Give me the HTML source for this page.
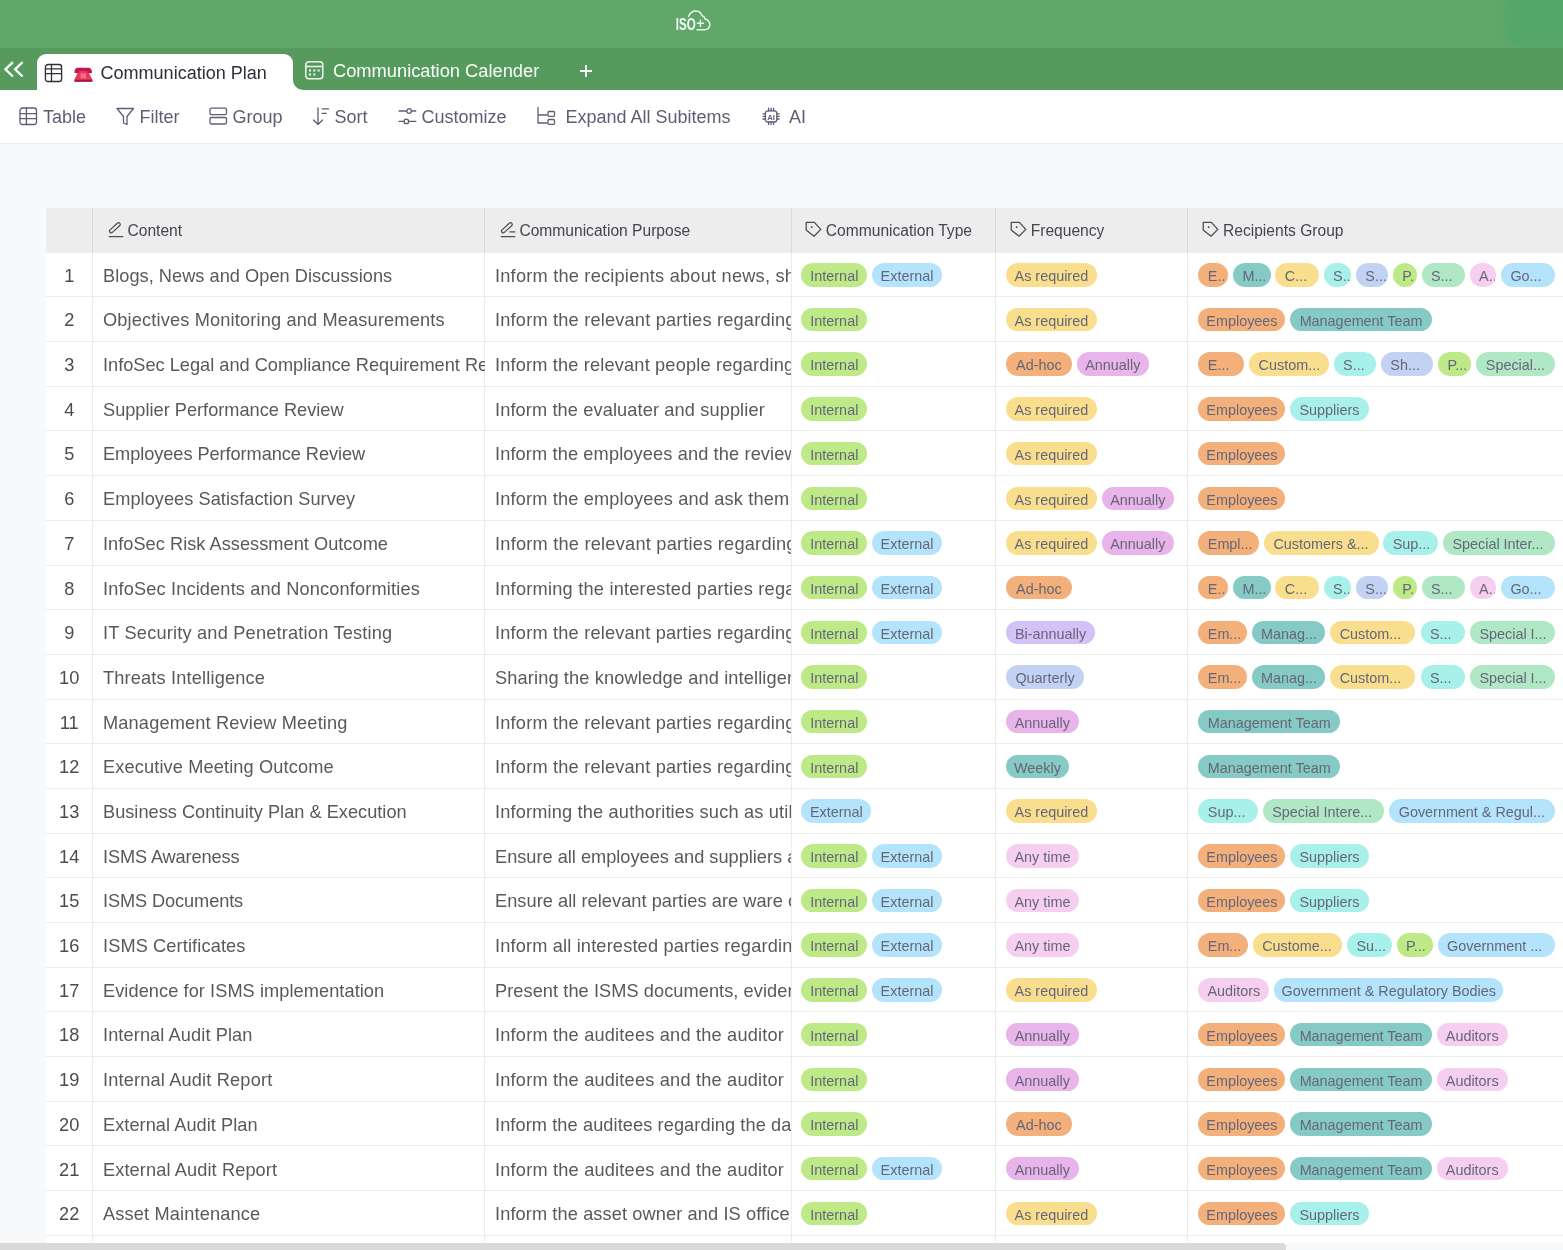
<!DOCTYPE html><html><head><meta charset="utf-8"><style>
*{margin:0;padding:0;box-sizing:border-box}
html,body{width:1563px;height:1250px;overflow:hidden;background:#f8f9fb;font-family:"Liberation Sans",sans-serif}
#wrap{position:absolute;left:0;top:0;width:1563px;height:1250px;will-change:transform;filter:blur(0.4px)}
.abs{position:absolute}
#top{position:absolute;left:0;top:0;width:1563px;height:47.5px;background:#60a76a}
#blob{position:absolute;left:1505px;top:-12px;width:80px;height:59px;background:#54a769;border-radius:16px;filter:blur(2.5px)}
#tabs{position:absolute;left:0;top:47.5px;width:1563px;height:42.7px;background:#569a5e}
#tb{position:absolute;left:0;top:90.2px;width:1563px;height:53.8px;background:#fff;border-bottom:1px solid #ececee}
.tabact{position:absolute;left:37px;top:54.3px;width:256px;height:40px;background:#fff;border-radius:9px 9px 0 0}
.tabinv{position:absolute;left:293px;top:80px;width:12px;height:10.2px;background:#fff}
.tabinv2{position:absolute;left:293px;top:70px;width:24px;height:20.2px;background:#569a5e;border-radius:0 0 0 10px}
.tl{position:absolute;white-space:nowrap;font-size:18px;line-height:20px}
.ti{position:absolute;white-space:nowrap;font-size:18px;line-height:20px;color:#5c5e74}
#grid{position:absolute;left:46px;top:208.2px;width:1517px;height:1035px;background:#fff}
#hdr{position:absolute;left:46px;top:208.2px;width:1517px;height:44.5px;background:#ededed}
.hl{position:absolute;top:0;height:44.5px;width:1px;background:#dadada}
.ht{position:absolute;top:0;height:44.5px;display:flex;align-items:center;font-size:15.6px;color:#454552;white-space:nowrap}
.hts{position:absolute;top:221.2px;height:20px;line-height:20px;font-size:15.6px;color:#454552;white-space:nowrap}
.abs>svg{display:block}
.ht svg{margin-right:4px}
.vl{position:absolute;top:252.7px;height:990px;width:1px;background:#ececec}
.row{position:absolute;left:46px;width:1517px;height:44.69px;border-bottom:1px solid #ececec}
.row>*{position:absolute}
.num{left:0;width:46.4px;top:0;height:44px;line-height:46px;text-align:center;font-size:18.2px;color:#4c4c4c}
.txt{top:0;height:44px;line-height:46px;font-size:18.2px;color:#595959;white-space:nowrap;overflow:hidden}
.p{top:10.4px;height:23.5px;line-height:26.3px;border-radius:12px;font-size:14.4px;color:#66667a;white-space:nowrap;overflow:hidden}
.p.c{text-align:center}
.p.t{padding-left:9.4px}
#sb{position:absolute;left:0;top:1243.3px;width:1563px;height:7px;background:#f8f9fb}
#thumb{position:absolute;left:0;top:1243.3px;width:1286px;height:7px;background:#d9d9d9;border-radius:0 4px 0 0}
</style></head><body><div id="wrap">
<div id="top"></div><div id="blob"></div>
<svg class="abs" style="left:674px;top:9px" width="40" height="24" viewBox="0 0 40 24"><text x="1.8" y="20.7" font-family="Liberation Sans" font-weight="bold" font-size="16.5" fill="#f4f8f4" textLength="20" lengthAdjust="spacingAndGlyphs">ISO</text><path d="M14.5 7.5 Q17 1.8 22 2 Q26.5 2.2 27.8 6.5 Q30.5 7.2 31.2 10 Q35.8 11.5 35.8 15.8 Q35.5 20.6 30.5 20.8 H23" fill="none" stroke="#eef4ee" stroke-width="1.5" stroke-linecap="round"/><path d="M26.4 10.7 V17.9 M22.8 14.3 H30" stroke="#eef4ee" stroke-width="1.4"/></svg>
<div id="tabs"></div>
<div id="tb"></div>
<div class="tabact"></div><div class="tabinv"></div><div class="tabinv2"></div>
<svg class="abs" style="left:3px;top:60px" width="22" height="20" viewBox="0 0 22 20" fill="none" stroke="#fff" stroke-width="2.3" stroke-linecap="butt" stroke-linejoin="miter"><path d="M9.9 2.1 L2.4 9.3 L9.9 16.5"/><path d="M19.6 2.1 L12.1 9.3 L19.6 16.5"/></svg>
<svg class="abs" style="left:44px;top:63px" width="20" height="20" viewBox="0 0 20 20" fill="none" stroke="#2f2f38" stroke-width="1.3"><rect x="1.4" y="1.5" width="16.2" height="17" rx="2.6"/><path d="M1.4 5.8 H17.6 M1.4 10.6 H17.6 M7.5 1.5 V18.5"/></svg>
<svg class="abs" style="left:74px;top:67px" width="19" height="16" viewBox="0 0 19 16"><path d="M4.3 4.2 H14.2 L18.3 12.5 V14.7 H0.5 V12.5 Z" fill="#e8375b"/><path d="M0.4 5.9 Q0.6 1.2 3.2 0.8 H15.2 Q17.8 1.2 18.1 5.9 H13.6 L13.2 4.4 H5.3 L4.9 5.9 Z" fill="#c01848"/><rect x="0.5" y="12.7" width="17.8" height="2" fill="#a8173e"/><rect x="6.6" y="6.3" width="5.6" height="5.2" fill="#f09ab0" opacity="0.55"/></svg>
<div class="tl" style="left:100.5px;top:63.2px;color:#2e2e3a;font-size:18.05px">Communication Plan</div>
<svg class="abs" style="left:304px;top:60px" width="21" height="21" viewBox="0 0 21 21" fill="none" stroke="#f2f6f2" stroke-width="1.5"><rect x="1.8" y="1.8" width="17" height="17" rx="3"/><path d="M1.8 6.5 H18.8"/><g fill="#f2f6f2" stroke="none"><rect x="5" y="9.5" width="2" height="2"/><rect x="9.3" y="9.5" width="2" height="2"/><rect x="13.6" y="9.5" width="2" height="2"/><rect x="5" y="13.5" width="2" height="2"/><rect x="9.3" y="13.5" width="2" height="2"/></g></svg>
<div class="tl" style="left:333px;top:61px;color:#fbfdfb;font-size:18.3px">Communication Calender</div>
<svg class="abs" style="left:579px;top:64px" width="14" height="14" viewBox="0 0 14 14" stroke="#fff" stroke-width="1.8"><path d="M7 1 V13 M1 7 H13"/></svg>
<svg class="abs" style="left:19px;top:107px" width="19" height="19" viewBox="0 0 19 19" fill="none" stroke="#5c5e74" stroke-width="1.3" stroke-linecap="round" stroke-linejoin="round"><rect x="1" y="1" width="16.5" height="16.5" rx="2.5"/><path d="M1 6.6 H17.5 M1 11.6 H17.5 M7.4 1 V17.5"/></svg>
<div class="ti" style="left:43px;top:107px">Table</div>
<svg class="abs" style="left:116px;top:107px" width="19" height="19" viewBox="0 0 19 19" fill="none" stroke="#5c5e74" stroke-width="1.3" stroke-linecap="round" stroke-linejoin="round"><path d="M1 1.5 H17.5 L11 9.5 V17.5 L7.5 16 V9.5 Z"/></svg>
<div class="ti" style="left:139.5px;top:107px">Filter</div>
<svg class="abs" style="left:209px;top:107px" width="19" height="19" viewBox="0 0 19 19" fill="none" stroke="#5c5e74" stroke-width="1.3" stroke-linecap="round" stroke-linejoin="round"><rect x="1" y="1.2" width="16.5" height="6.5" rx="1.5"/><rect x="1" y="10.5" width="16.5" height="6.5" rx="1.5"/></svg>
<div class="ti" style="left:232.5px;top:107px">Group</div>
<svg class="abs" style="left:311px;top:107px" width="19" height="19" viewBox="0 0 19 19" fill="none" stroke="#5c5e74" stroke-width="1.3" stroke-linecap="round" stroke-linejoin="round"><path d="M7 1 V17.5 M2.5 13 L7 17.5 L11.5 13 M11.2 1.8 H17.6 M11.2 6.4 H15.2"/></svg>
<div class="ti" style="left:334.5px;top:107px">Sort</div>
<svg class="abs" style="left:398px;top:107px" width="19" height="19" viewBox="0 0 19 19" fill="none" stroke="#5c5e74" stroke-width="1.3" stroke-linecap="round" stroke-linejoin="round"><path d="M1 4 H8.7 M13.5 4 H17.8 M1 14.4 H5.8 M10.8 14.4 H17.8"/><circle cx="11.1" cy="4" r="2.3"/><circle cx="8.3" cy="14.4" r="2.3"/></svg>
<div class="ti" style="left:421.5px;top:107px">Customize</div>
<svg class="abs" style="left:536px;top:106px" width="21" height="20" viewBox="0 0 21 20" fill="none" stroke="#5c5e74" stroke-width="1.3" stroke-linecap="round" stroke-linejoin="round"><path d="M2 1.5 V17 H11 M2 9 H11"/><rect x="12" y="5.5" width="6.5" height="4.8" rx="1"/><rect x="12" y="13.5" width="6.5" height="4.8" rx="1"/></svg>
<div class="ti" style="left:565.5px;top:107px">Expand All Subitems</div>
<svg class="abs" style="left:762px;top:107px" width="19" height="19" viewBox="0 0 19 19" fill="none" stroke="#5c5e74" stroke-width="1.3" stroke-linecap="round" stroke-linejoin="round"><rect x="3.4" y="3.8" width="11.4" height="11.2" rx="2.6"/><path d="M6.6 1.2 V3.8 M9.1 1.2 V3.8 M11.6 1.2 V3.8 M6.6 15 V17.4 M9.1 15 V17.4 M11.6 15 V17.4 M1 6.8 H3.4 M1 9.4 H3.4 M1 12 H3.4 M14.8 6.8 H17.2 M14.8 9.4 H17.2 M14.8 12 H17.2"/><text x="5.2" y="12.9" font-size="7.8" font-family="Liberation Sans" font-weight="bold" fill="#5c5e74" stroke="none">AI</text></svg>
<div class="ti" style="left:789px;top:107px">AI</div>
<div id="grid"></div>
<div id="hdr">
<div class="hl" style="left:45.9px"></div>
<div class="hl" style="left:438.1px"></div>
<div class="hl" style="left:744.5px"></div>
<div class="hl" style="left:948.9px"></div>
<div class="hl" style="left:1141.4px"></div>
</div>
<div class="abs" style="left:107.5px;top:219.5px"><svg width="16" height="18" viewBox="0 0 16 18" fill="none" stroke="#505058" stroke-width="1.3" stroke-linecap="round"><rect x="0.25" y="6.1" width="13.2" height="3.4" rx="1.7" transform="rotate(-42.7 6.85 7.8)"/><path d="M1.15 16.6 H14.85"/></svg></div><div class="hts" style="left:127.5px">Content</div>
<div class="abs" style="left:499.5px;top:219.5px"><svg width="16" height="18" viewBox="0 0 16 18" fill="none" stroke="#505058" stroke-width="1.3" stroke-linecap="round"><rect x="0.25" y="6.1" width="13.2" height="3.4" rx="1.7" transform="rotate(-42.7 6.85 7.8)"/><path d="M9.85 11.9 H14.85"/><path d="M1.15 16.6 H14.85"/></svg></div><div class="hts" style="left:519.4px">Communication Purpose</div>
<div class="abs" style="left:805px;top:221px"><svg width="17" height="17" viewBox="0 0 17 17" fill="none" stroke="#4a4a55" stroke-width="1.25" stroke-linejoin="round"><path d="M1.2 1.3 H9.4 L15.8 8.4 L9 15.2 L1.2 9 Z"/><circle cx="6.7" cy="6.1" r="0.95" fill="#3a3a45" stroke="none"/></svg></div><div class="hts" style="left:825.8px">Communication Type</div>
<div class="abs" style="left:1010.2px;top:221px"><svg width="17" height="17" viewBox="0 0 17 17" fill="none" stroke="#4a4a55" stroke-width="1.25" stroke-linejoin="round"><path d="M1.2 1.3 H9.4 L15.8 8.4 L9 15.2 L1.2 9 Z"/><circle cx="6.7" cy="6.1" r="0.95" fill="#3a3a45" stroke="none"/></svg></div><div class="hts" style="left:1030.7px">Frequency</div>
<div class="abs" style="left:1202px;top:221px"><svg width="17" height="17" viewBox="0 0 17 17" fill="none" stroke="#4a4a55" stroke-width="1.25" stroke-linejoin="round"><path d="M1.2 1.3 H9.4 L15.8 8.4 L9 15.2 L1.2 9 Z"/><circle cx="6.7" cy="6.1" r="0.95" fill="#3a3a45" stroke="none"/></svg></div><div class="hts" style="left:1223px">Recipients Group</div>
<div class="vl" style="left:91.9px"></div><div class="vl" style="left:484.1px"></div><div class="vl" style="left:790.5px"></div><div class="vl" style="left:994.9px"></div><div class="vl" style="left:1187.4px"></div>
<div class="row" style="top:252.70px"><div class="num">1</div><div class="txt" style="left:57.0px;width:381.6px;letter-spacing:0.035px">Blogs, News and Open Discussions</div><div class="txt" style="left:449.0px;width:296.0px;letter-spacing:0.22px">Inform the recipients about news, shared knowledge and open discussions</div><span class="p c" style="left:755.4px;width:65.9px;background:#bde987">Internal</span><span class="p c" style="left:826.1px;width:69.8px;background:#b3e4fb">External</span><span class="p c" style="left:960.0px;width:90.7px;background:#f9df8d">As required</span><span class="p t" style="left:1152.4px;width:29.8px;background:#f4b07a">E...</span><span class="p t" style="left:1187.0px;width:37.7px;background:#86cac5">M...</span><span class="p t" style="left:1229.4px;width:43.5px;background:#f9df8d">C...</span><span class="p t" style="left:1277.7px;width:27.4px;background:#a8f0ea">S..</span><span class="p t" style="left:1309.9px;width:32.2px;background:#c1d2f3">S...</span><span class="p t" style="left:1346.9px;width:23.8px;background:#bde987">P.</span><span class="p t" style="left:1375.5px;width:43.4px;background:#b0e8c6">S...</span><span class="p t" style="left:1423.7px;width:26.5px;background:#f6cff0">A..</span><span class="p t" style="left:1455.0px;width:53.7px;background:#b3e4fb">Go...</span></div>
<div class="row" style="top:297.39px"><div class="num">2</div><div class="txt" style="left:57.0px;width:381.6px;letter-spacing:0.16px">Objectives Monitoring and Measurements</div><div class="txt" style="left:449.0px;width:296.0px;letter-spacing:0.2px">Inform the relevant parties regarding the objectives</div><span class="p c" style="left:755.4px;width:65.9px;background:#bde987">Internal</span><span class="p c" style="left:960.0px;width:90.7px;background:#f9df8d">As required</span><span class="p c" style="left:1152.4px;width:87.1px;background:#f4b07a">Employees</span><span class="p c" style="left:1244.3px;width:141.6px;background:#86cac5">Management Team</span></div>
<div class="row" style="top:342.08px"><div class="num">3</div><div class="txt" style="left:57.0px;width:381.6px;letter-spacing:0px">InfoSec Legal and Compliance Requirement Review</div><div class="txt" style="left:449.0px;width:296.0px;letter-spacing:0.17px">Inform the relevant people regarding the requirements</div><span class="p c" style="left:755.4px;width:65.9px;background:#bde987">Internal</span><span class="p c" style="left:960.0px;width:65.7px;background:#f4b07a">Ad-hoc</span><span class="p c" style="left:1030.5px;width:72.5px;background:#e8b4ea">Annually</span><span class="p t" style="left:1152.4px;width:46.0px;background:#f4b07a">E...</span><span class="p t" style="left:1203.2px;width:79.7px;background:#f9df8d">Custom...</span><span class="p t" style="left:1287.7px;width:42.0px;background:#a8f0ea">S...</span><span class="p t" style="left:1334.9px;width:52.1px;background:#c1d2f3">Sh...</span><span class="p t" style="left:1392.2px;width:32.9px;background:#bde987">P...</span><span class="p t" style="left:1430.4px;width:78.3px;background:#b0e8c6">Special...</span></div>
<div class="row" style="top:386.77px"><div class="num">4</div><div class="txt" style="left:57.0px;width:381.6px;letter-spacing:0px">Supplier Performance Review</div><div class="txt" style="left:449.0px;width:296.0px;letter-spacing:0.12px">Inform the evaluater and supplier</div><span class="p c" style="left:755.4px;width:65.9px;background:#bde987">Internal</span><span class="p c" style="left:960.0px;width:90.7px;background:#f9df8d">As required</span><span class="p c" style="left:1152.4px;width:87.1px;background:#f4b07a">Employees</span><span class="p c" style="left:1244.3px;width:78.3px;background:#a8f0ea">Suppliers</span></div>
<div class="row" style="top:431.46px"><div class="num">5</div><div class="txt" style="left:57.0px;width:381.6px;letter-spacing:-0.06px">Employees Performance Review</div><div class="txt" style="left:449.0px;width:296.0px;letter-spacing:0.13px">Inform the employees and the reviewers</div><span class="p c" style="left:755.4px;width:65.9px;background:#bde987">Internal</span><span class="p c" style="left:960.0px;width:90.7px;background:#f9df8d">As required</span><span class="p c" style="left:1152.4px;width:87.1px;background:#f4b07a">Employees</span></div>
<div class="row" style="top:476.15px"><div class="num">6</div><div class="txt" style="left:57.0px;width:381.6px;letter-spacing:0.05px">Employees Satisfaction Survey</div><div class="txt" style="left:449.0px;width:296.0px;letter-spacing:0.16px">Inform the employees and ask them</div><span class="p c" style="left:755.4px;width:65.9px;background:#bde987">Internal</span><span class="p c" style="left:960.0px;width:90.7px;background:#f9df8d">As required</span><span class="p c" style="left:1055.5px;width:72.5px;background:#e8b4ea">Annually</span><span class="p c" style="left:1152.4px;width:87.1px;background:#f4b07a">Employees</span></div>
<div class="row" style="top:520.84px"><div class="num">7</div><div class="txt" style="left:57.0px;width:381.6px;letter-spacing:0.03px">InfoSec Risk Assessment Outcome</div><div class="txt" style="left:449.0px;width:296.0px;letter-spacing:0.23px">Inform the relevant parties regarding the outcome</div><span class="p c" style="left:755.4px;width:65.9px;background:#bde987">Internal</span><span class="p c" style="left:826.1px;width:69.8px;background:#b3e4fb">External</span><span class="p c" style="left:960.0px;width:90.7px;background:#f9df8d">As required</span><span class="p c" style="left:1055.5px;width:72.5px;background:#e8b4ea">Annually</span><span class="p t" style="left:1152.4px;width:60.8px;background:#f4b07a">Empl...</span><span class="p t" style="left:1218.0px;width:114.5px;background:#f9df8d">Customers &...</span><span class="p t" style="left:1337.3px;width:54.4px;background:#a8f0ea">Sup...</span><span class="p t" style="left:1397.0px;width:111.7px;background:#b0e8c6">Special Inter...</span></div>
<div class="row" style="top:565.53px"><div class="num">8</div><div class="txt" style="left:57.0px;width:381.6px;letter-spacing:0.15px">InfoSec Incidents and Nonconformities</div><div class="txt" style="left:449.0px;width:296.0px;letter-spacing:0.227px">Informing the interested parties regarding incidents</div><span class="p c" style="left:755.4px;width:65.9px;background:#bde987">Internal</span><span class="p c" style="left:826.1px;width:69.8px;background:#b3e4fb">External</span><span class="p c" style="left:960.0px;width:65.7px;background:#f4b07a">Ad-hoc</span><span class="p t" style="left:1152.4px;width:29.8px;background:#f4b07a">E...</span><span class="p t" style="left:1187.0px;width:37.7px;background:#86cac5">M...</span><span class="p t" style="left:1229.4px;width:43.5px;background:#f9df8d">C...</span><span class="p t" style="left:1277.7px;width:27.4px;background:#a8f0ea">S..</span><span class="p t" style="left:1309.9px;width:32.2px;background:#c1d2f3">S...</span><span class="p t" style="left:1346.9px;width:23.8px;background:#bde987">P.</span><span class="p t" style="left:1375.5px;width:43.4px;background:#b0e8c6">S...</span><span class="p t" style="left:1423.7px;width:26.5px;background:#f6cff0">A..</span><span class="p t" style="left:1455.0px;width:53.7px;background:#b3e4fb">Go...</span></div>
<div class="row" style="top:610.22px"><div class="num">9</div><div class="txt" style="left:57.0px;width:381.6px;letter-spacing:0.2px">IT Security and Penetration Testing</div><div class="txt" style="left:449.0px;width:296.0px;letter-spacing:0.2px">Inform the relevant parties regarding the results</div><span class="p c" style="left:755.4px;width:65.9px;background:#bde987">Internal</span><span class="p c" style="left:826.1px;width:69.8px;background:#b3e4fb">External</span><span class="p c" style="left:960.0px;width:89.0px;background:#d3c2f8">Bi-annually</span><span class="p t" style="left:1152.4px;width:48.4px;background:#f4b07a">Em...</span><span class="p t" style="left:1205.6px;width:73.2px;background:#86cac5">Manag...</span><span class="p t" style="left:1284.3px;width:85.2px;background:#f9df8d">Custom...</span><span class="p t" style="left:1374.5px;width:44.4px;background:#a8f0ea">S...</span><span class="p t" style="left:1424.0px;width:84.7px;background:#b0e8c6">Special I...</span></div>
<div class="row" style="top:654.91px"><div class="num">10</div><div class="txt" style="left:57.0px;width:381.6px;letter-spacing:0.17px">Threats Intelligence</div><div class="txt" style="left:449.0px;width:296.0px;letter-spacing:0.14px">Sharing the knowledge and intelligence</div><span class="p c" style="left:755.4px;width:65.9px;background:#bde987">Internal</span><span class="p c" style="left:960.0px;width:78.0px;background:#c1d2f3">Quarterly</span><span class="p t" style="left:1152.4px;width:48.4px;background:#f4b07a">Em...</span><span class="p t" style="left:1205.6px;width:73.2px;background:#86cac5">Manag...</span><span class="p t" style="left:1284.3px;width:85.2px;background:#f9df8d">Custom...</span><span class="p t" style="left:1374.5px;width:44.4px;background:#a8f0ea">S...</span><span class="p t" style="left:1424.0px;width:84.7px;background:#b0e8c6">Special I...</span></div>
<div class="row" style="top:699.60px"><div class="num">11</div><div class="txt" style="left:57.0px;width:381.6px;letter-spacing:0.16px">Management Review Meeting</div><div class="txt" style="left:449.0px;width:296.0px;letter-spacing:0.2px">Inform the relevant parties regarding the meeting</div><span class="p c" style="left:755.4px;width:65.9px;background:#bde987">Internal</span><span class="p c" style="left:960.0px;width:72.5px;background:#e8b4ea">Annually</span><span class="p c" style="left:1152.4px;width:141.6px;background:#86cac5">Management Team</span></div>
<div class="row" style="top:744.29px"><div class="num">12</div><div class="txt" style="left:57.0px;width:381.6px;letter-spacing:0.13px">Executive Meeting Outcome</div><div class="txt" style="left:449.0px;width:296.0px;letter-spacing:0.2px">Inform the relevant parties regarding the outcome</div><span class="p c" style="left:755.4px;width:65.9px;background:#bde987">Internal</span><span class="p c" style="left:960.0px;width:63.0px;background:#86cac5">Weekly</span><span class="p c" style="left:1152.4px;width:141.6px;background:#86cac5">Management Team</span></div>
<div class="row" style="top:788.98px"><div class="num">13</div><div class="txt" style="left:57.0px;width:381.6px;letter-spacing:0.01px">Business Continuity Plan &amp; Execution</div><div class="txt" style="left:449.0px;width:296.0px;letter-spacing:0.17px">Informing the authorities such as utilities</div><span class="p c" style="left:755.4px;width:69.8px;background:#b3e4fb">External</span><span class="p c" style="left:960.0px;width:90.7px;background:#f9df8d">As required</span><span class="p t" style="left:1152.4px;width:59.6px;background:#a8f0ea">Sup...</span><span class="p t" style="left:1216.8px;width:121.7px;background:#b0e8c6">Special Intere...</span><span class="p t" style="left:1343.3px;width:165.4px;background:#b3e4fb">Government &amp; Regul...</span></div>
<div class="row" style="top:833.67px"><div class="num">14</div><div class="txt" style="left:57.0px;width:381.6px;letter-spacing:-0.12px">ISMS Awareness</div><div class="txt" style="left:449.0px;width:296.0px;letter-spacing:0.0px">Ensure all employees and suppliers are aware</div><span class="p c" style="left:755.4px;width:65.9px;background:#bde987">Internal</span><span class="p c" style="left:826.1px;width:69.8px;background:#b3e4fb">External</span><span class="p c" style="left:960.0px;width:73.0px;background:#f6cff0">Any time</span><span class="p c" style="left:1152.4px;width:87.1px;background:#f4b07a">Employees</span><span class="p c" style="left:1244.3px;width:78.3px;background:#a8f0ea">Suppliers</span></div>
<div class="row" style="top:878.36px"><div class="num">15</div><div class="txt" style="left:57.0px;width:381.6px;letter-spacing:-0.1px">ISMS Documents</div><div class="txt" style="left:449.0px;width:296.0px;letter-spacing:0.05px">Ensure all relevant parties are ware of the documents</div><span class="p c" style="left:755.4px;width:65.9px;background:#bde987">Internal</span><span class="p c" style="left:826.1px;width:69.8px;background:#b3e4fb">External</span><span class="p c" style="left:960.0px;width:73.0px;background:#f6cff0">Any time</span><span class="p c" style="left:1152.4px;width:87.1px;background:#f4b07a">Employees</span><span class="p c" style="left:1244.3px;width:78.3px;background:#a8f0ea">Suppliers</span></div>
<div class="row" style="top:923.05px"><div class="num">16</div><div class="txt" style="left:57.0px;width:381.6px;letter-spacing:0.12px">ISMS Certificates</div><div class="txt" style="left:449.0px;width:296.0px;letter-spacing:0.165px">Inform all interested parties regarding certificates</div><span class="p c" style="left:755.4px;width:65.9px;background:#bde987">Internal</span><span class="p c" style="left:826.1px;width:69.8px;background:#b3e4fb">External</span><span class="p c" style="left:960.0px;width:73.0px;background:#f6cff0">Any time</span><span class="p t" style="left:1152.4px;width:49.6px;background:#f4b07a">Em...</span><span class="p t" style="left:1206.8px;width:89.5px;background:#f9df8d">Custome...</span><span class="p t" style="left:1301.0px;width:44.7px;background:#a8f0ea">Su...</span><span class="p t" style="left:1350.7px;width:36.3px;background:#bde987">P...</span><span class="p t" style="left:1391.7px;width:117.0px;background:#b3e4fb">Government ...</span></div>
<div class="row" style="top:967.74px"><div class="num">17</div><div class="txt" style="left:57.0px;width:381.6px;letter-spacing:0.07px">Evidence for ISMS implementation</div><div class="txt" style="left:449.0px;width:296.0px;letter-spacing:0.07px">Present the ISMS documents, evidences and records</div><span class="p c" style="left:755.4px;width:65.9px;background:#bde987">Internal</span><span class="p c" style="left:826.1px;width:69.8px;background:#b3e4fb">External</span><span class="p c" style="left:960.0px;width:90.7px;background:#f9df8d">As required</span><span class="p c" style="left:1152.4px;width:71.0px;background:#f6cff0">Auditors</span><span class="p c" style="left:1228.2px;width:229.2px;background:#b3e4fb">Government &amp; Regulatory Bodies</span></div>
<div class="row" style="top:1012.43px"><div class="num">18</div><div class="txt" style="left:57.0px;width:381.6px;letter-spacing:0.1px">Internal Audit Plan</div><div class="txt" style="left:449.0px;width:296.0px;letter-spacing:0.2px">Inform the auditees and the auditor</div><span class="p c" style="left:755.4px;width:65.9px;background:#bde987">Internal</span><span class="p c" style="left:960.0px;width:72.5px;background:#e8b4ea">Annually</span><span class="p c" style="left:1152.4px;width:87.1px;background:#f4b07a">Employees</span><span class="p c" style="left:1244.3px;width:141.6px;background:#86cac5">Management Team</span><span class="p c" style="left:1390.7px;width:71.0px;background:#f6cff0">Auditors</span></div>
<div class="row" style="top:1057.12px"><div class="num">19</div><div class="txt" style="left:57.0px;width:381.6px;letter-spacing:0.17px">Internal Audit Report</div><div class="txt" style="left:449.0px;width:296.0px;letter-spacing:0.2px">Inform the auditees and the auditor</div><span class="p c" style="left:755.4px;width:65.9px;background:#bde987">Internal</span><span class="p c" style="left:960.0px;width:72.5px;background:#e8b4ea">Annually</span><span class="p c" style="left:1152.4px;width:87.1px;background:#f4b07a">Employees</span><span class="p c" style="left:1244.3px;width:141.6px;background:#86cac5">Management Team</span><span class="p c" style="left:1390.7px;width:71.0px;background:#f6cff0">Auditors</span></div>
<div class="row" style="top:1101.81px"><div class="num">20</div><div class="txt" style="left:57.0px;width:381.6px;letter-spacing:0.05px">External Audit Plan</div><div class="txt" style="left:449.0px;width:296.0px;letter-spacing:0.09px">Inform the auditees regarding the dates</div><span class="p c" style="left:755.4px;width:65.9px;background:#bde987">Internal</span><span class="p c" style="left:960.0px;width:65.7px;background:#f4b07a">Ad-hoc</span><span class="p c" style="left:1152.4px;width:87.1px;background:#f4b07a">Employees</span><span class="p c" style="left:1244.3px;width:141.6px;background:#86cac5">Management Team</span></div>
<div class="row" style="top:1146.50px"><div class="num">21</div><div class="txt" style="left:57.0px;width:381.6px;letter-spacing:0.11px">External Audit Report</div><div class="txt" style="left:449.0px;width:296.0px;letter-spacing:0.2px">Inform the auditees and the auditor</div><span class="p c" style="left:755.4px;width:65.9px;background:#bde987">Internal</span><span class="p c" style="left:826.1px;width:69.8px;background:#b3e4fb">External</span><span class="p c" style="left:960.0px;width:72.5px;background:#e8b4ea">Annually</span><span class="p c" style="left:1152.4px;width:87.1px;background:#f4b07a">Employees</span><span class="p c" style="left:1244.3px;width:141.6px;background:#86cac5">Management Team</span><span class="p c" style="left:1390.7px;width:71.0px;background:#f6cff0">Auditors</span></div>
<div class="row" style="top:1191.19px"><div class="num">22</div><div class="txt" style="left:57.0px;width:381.6px;letter-spacing:0.15px">Asset Maintenance</div><div class="txt" style="left:449.0px;width:296.0px;letter-spacing:0.11px">Inform the asset owner and IS officer</div><span class="p c" style="left:755.4px;width:65.9px;background:#bde987">Internal</span><span class="p c" style="left:960.0px;width:90.7px;background:#f9df8d">As required</span><span class="p c" style="left:1152.4px;width:87.1px;background:#f4b07a">Employees</span><span class="p c" style="left:1244.3px;width:78.3px;background:#a8f0ea">Suppliers</span></div>
<div id="sb"></div><div id="thumb"></div>
</div></body></html>
